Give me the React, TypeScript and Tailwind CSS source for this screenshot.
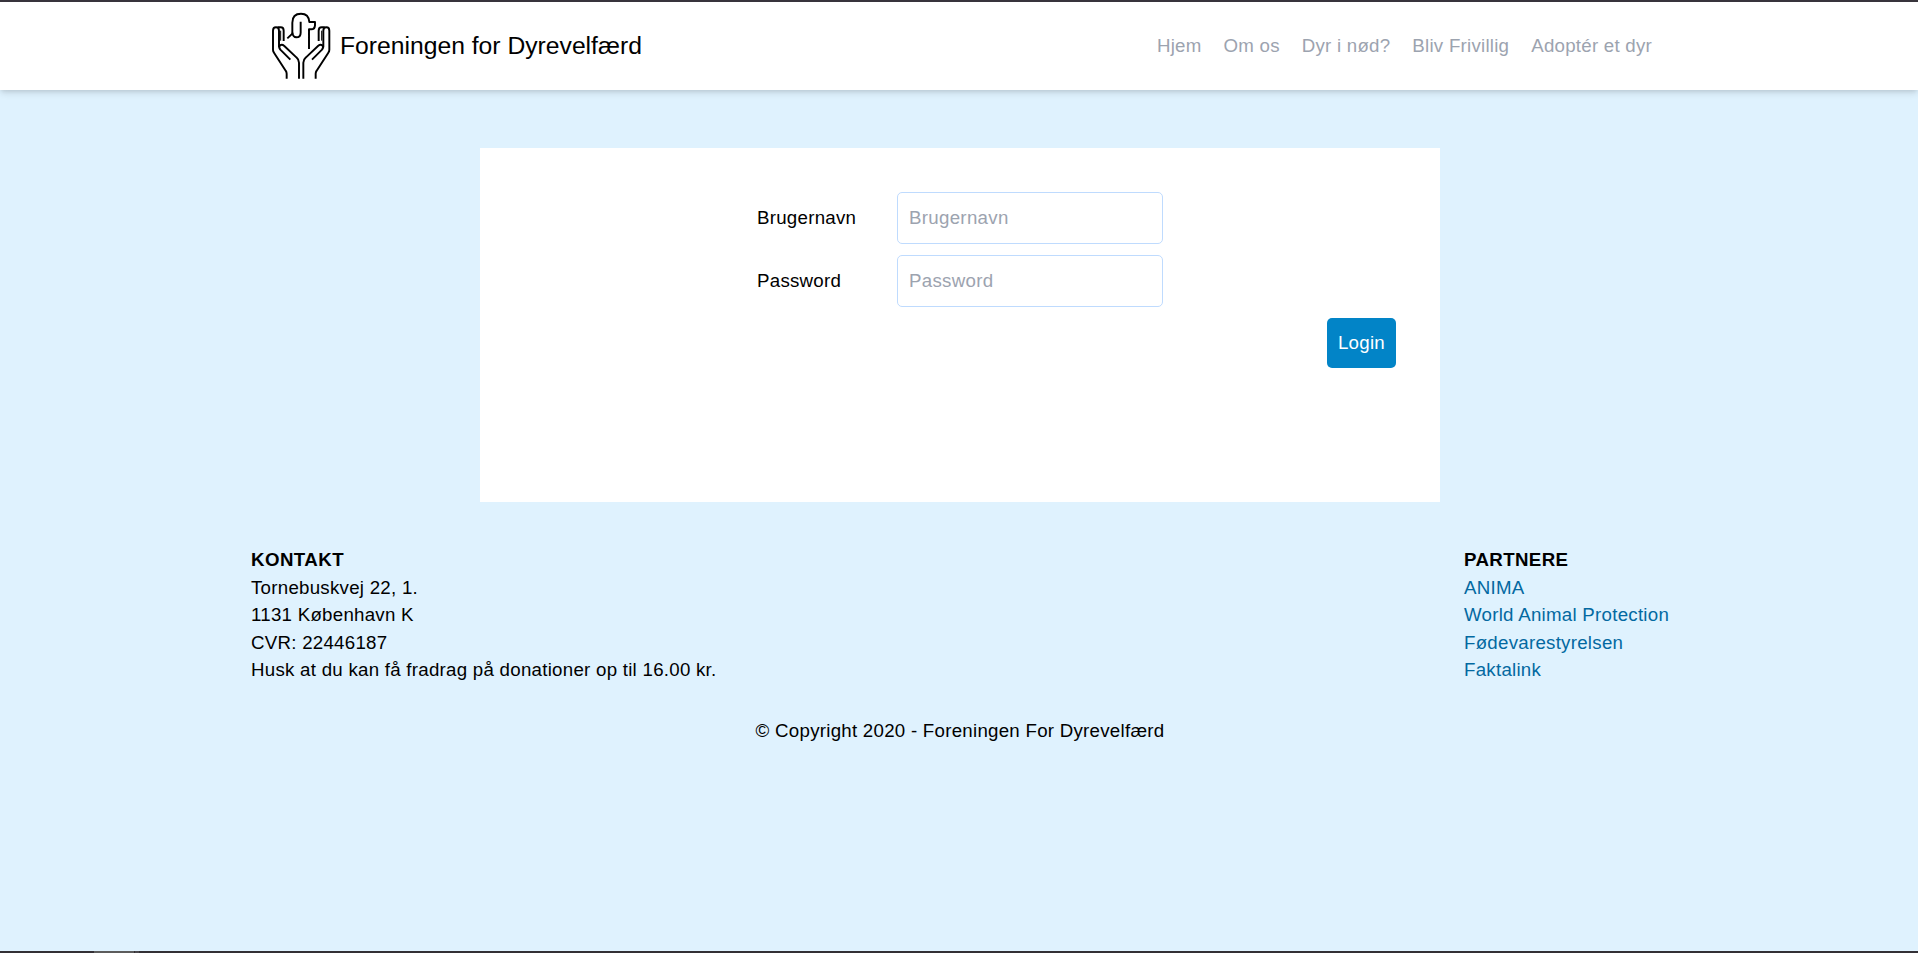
const navItems = ['Hjem', 'Om os', 'Dyr i nød?', 'Bliv Frivillig', 'Adoptér et dyr'];
const partners = ['ANIMA', 'World Animal Protection', 'Fødevarestyrelsen', 'Faktalink'];

function Hand() {
  return (
    <>
      <path d="M80 236V221Q80 216 77 212L42 158Q39 154 39 149V92Q39 82 48 82Q57 82 57 92V142" />
      <path d="M53 82H62Q71 82 71 92V123" />
      <path d="M62 92V122" strokeWidth="3" />
      <path d="M91 179L61 149Q55 141 60 136Q66 132 73 138L109 172Q117 179 117 188V236" />
    </>
  );
}

function Logo() {
  return (
    <svg
      className="h-[95px] w-20 shrink-0"
      viewBox="0 0 240 285"
      fill="none"
      stroke="#000"
      strokeWidth="5.8"
      strokeLinejoin="round"
      aria-hidden="true"
    >
      <Hand />
      <g transform="translate(247 0) scale(-1 1)">
        <Hand />
      </g>
      <path d="M82 115L97 101V68C97 50 107 41 123 41C138 41 147 51 148 66H165V76Q164 88 154 88H147V147" />
      <path d="M97 98Q99 112 109 112Q122 112 122 98V65" />
    </svg>
  );
}

function Field({ label, type }: { label: string; type: string }) {
  return (
    <label className="flex items-center">
      <span className="w-[140px]">{label}</span>
      <input
        type={type}
        placeholder={label}
        className="h-[52px] w-[266px] rounded-[5px] border border-[#bfdbfe] px-[11px] tracking-[0.016em] placeholder:text-[#9ca3af] focus:outline-none"
      />
    </label>
  );
}

export default function App() {
  return (
    <div className="flex h-[953px] flex-col border-t-2 border-[#39353d] bg-[#dff2fe] font-['Liberation_Sans',Arial,sans-serif] text-[18.7px] leading-[27.5px] tracking-[0.014em] text-black">
      <header className="flex h-[88px] shrink-0 items-center justify-between bg-white pr-[266px] pl-[260px] shadow-[0_4px_7px_-1px_rgba(0,0,0,0.12),0_2px_4px_-1px_rgba(0,0,0,0.08)]">
        <div className="flex items-center">
          <div className="-mt-[13px] -mb-[16px]">
            <Logo />
          </div>
          <span className="text-[24.7px] tracking-normal">Foreningen for Dyrevelfærd</span>
        </div>
        <nav className="flex gap-[22px] tracking-[0.013em] text-[#9ca3af]">
          {navItems.map((item) => (
            <a key={item} href="#">{item}</a>
          ))}
        </nav>
      </header>

      <main className="mt-[58px] ml-[480px] flex h-[354px] w-[960px] shrink-0 flex-col bg-white p-[44px]">
        <form className="flex flex-col items-center gap-[11px]">
          <Field label="Brugernavn" type="text" />
          <Field label="Password" type="password" />
          <button type="button" className="h-[50px] w-[69px] self-end rounded-[5px] bg-[#0284c7] text-white">
            Login
          </button>
        </form>
      </main>

      <footer className="flex grow flex-col pt-11">
        <div className="flex justify-between pr-[249px] pl-[251px]">
          <section>
            <h2 className="font-bold tracking-[0.024em]">KONTAKT</h2>
            <p>Tornebuskvej 22, 1.</p>
            <p>1131 København K</p>
            <p>CVR: 22446187</p>
            <p>Husk at du kan få fradrag på donationer op til 16.00 kr.</p>
          </section>
          <section className="w-[205px] whitespace-nowrap">
            <h2 className="font-bold tracking-[0.02em]">PARTNERE</h2>
            <ul className="text-[#0369a1]">
              {partners.map((partner) => (
                <li key={partner}><a href="#">{partner}</a></li>
              ))}
            </ul>
          </section>
        </div>
        <p className="mt-[33px] pl-0.5 text-center">© Copyright 2020 - Foreningen For Dyrevelfærd</p>
      </footer>

      <div className="flex h-0.5 shrink-0 bg-[#333035] pl-[94px]">
        <div className="w-10 bg-[#5c5c5c]" />
        <div className="ml-px w-1 bg-[#4a484c]" />
      </div>
    </div>
  );
}
